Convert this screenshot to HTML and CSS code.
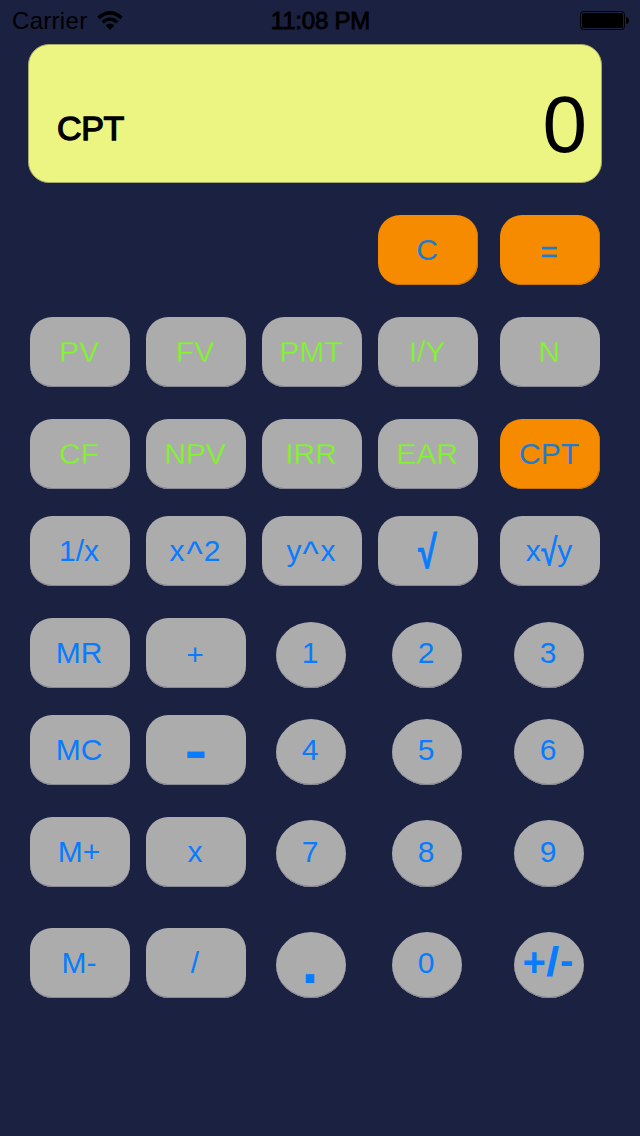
FILE: index.html
```html
<!DOCTYPE html>
<html lang="en">
<head>
<meta charset="utf-8">
<title>Financial Calculator</title>
<link rel="stylesheet" href="styles.css">
</head>
<body>
<header class="status">
  <div class="carrier"><span>Carrier</span>
    <svg class="wifi" width="26" height="20" viewBox="0 0 26 20"><path d="M1.500 6.800Q13-3.200 24.500 6.800" fill="none" stroke="#000" stroke-width="3.600"/><path d="M5.600 11.200Q13 4.800 20.400 11.200" fill="none" stroke="#000" stroke-width="3.300"/><path d="M8.600 14.400Q13 10.400 17.400 14.400L13 19Z"/></svg>
  </div>
  <div class="clock">11:08 PM</div>
  <svg class="battery" width="49" height="20" viewBox="0 0 49 20"><rect x=".5" y=".5" width="44" height="18" rx="3" fill="none" stroke="#000"/><rect x="2" y="2" width="41" height="15" rx="1.500"/><path d="M46 6Q49 6.500 49 9.500Q49 12.500 46 13Z"/></svg>
</header>
<main>
  <section class="display"><span class="mode">CPT</span><span class="value">0</span></section>
  <section class="keys">
    <div class="row end"><button class="key orange">C</button><button class="key orange low">=</button></div>
    <div class="row"><button class="key green">PV</button><button class="key green">FV</button><button class="key green">PMT</button><button class="key green">I/Y</button><button class="key green">N</button></div>
    <div class="row tight"><button class="key green">CF</button><button class="key green">NPV</button><button class="key green">IRR</button><button class="key green">EAR</button><button class="key orange">CPT</button></div>
    <div class="row"><button class="key">1/x</button><button class="key">x<span class="caret">^</span>2</button><button class="key">y<span class="caret">^</span>x</button><button class="key root"><span>√</span></button><button class="key">x<span class="radical">√</span>y</button></div>
    <div class="row tight"><button class="key">MR</button><button class="key low">+</button><button class="key digit">1</button><button class="key digit">2</button><button class="key digit">3</button></div>
    <div class="row"><button class="key">MC</button><button class="key minus"><span>-</span></button><button class="key digit">4</button><button class="key digit">5</button><button class="key digit">6</button></div>
    <div class="row wide"><button class="key">M+</button><button class="key">x</button><button class="key digit tall">7</button><button class="key digit tall">8</button><button class="key digit tall">9</button></div>
    <div class="row"><button class="key">M-</button><button class="key">/</button><button class="key digit point">.</button><button class="key digit">0</button><button class="key digit sign">+<span class="slash">/</span><span class="dash">-</span></button></div>
  </section>
</main>
</body>
</html>
```
FILE: styles.css
```css
* { box-sizing: border-box; }
body {
  margin: 0;
  width: 640px;
  height: 1136px;
  overflow: hidden;
  background: #1b2141;
  color: #000;
  font-family: "Liberation Sans", Arial, sans-serif;
}
.status {
  display: grid;
  grid-template-columns: 1fr auto 1fr;
  align-items: center;
  height: 44px;
  padding: 0 11px 3px 12px;
  font-size: 24px;
  line-height: 40px;
}
.carrier { display: flex; align-items: center; gap: 10px; letter-spacing: .3px; }
.clock { -webkit-text-stroke: .8px #000; letter-spacing: -.2px; }
.battery { justify-self: end; }
.display {
  display: flex;
  justify-content: space-between;
  width: 574px;
  height: 139px;
  margin-left: 28px;
  padding: 0 14px 0 28px;
  border: 1px solid #a5aa68;
  border-radius: 21px;
  background: #ecf582;
}
.mode { font-size: 34px; line-height: 166px; letter-spacing: -.4px; -webkit-text-stroke: 1.3px #000; }
.value { font-size: 80px; line-height: 159px; }
.keys { padding: 32px 40px 0 30px; }
.row { display: flex; align-items: flex-end; gap: 16px; height: 70px; margin-bottom: 32px; }
.tight { margin-bottom: 27px; }
.wide { margin-bottom: 41px; }
.end { justify-content: flex-end; }
.key {
  flex: none;
  width: 100px;
  height: 70px;
  padding: 0 2px 0 0;
  border: 0;
  border-radius: 22px;
  background: #acacac;
  box-shadow: inset 0 -2px 0 -1px #878995, inset 0 -1px 0 #878995;
  color: #087bff;
  font: 30px/70px "Liberation Sans", Arial, sans-serif;
  text-align: center;
  white-space: nowrap;
}
.key:last-child { margin-left: 6px; }
.green { color: #82f52c; -webkit-text-stroke: .3px #acacac; }
.orange { background: #f78b00; box-shadow: inset -1px -1px 0 #c87514; color: #207bcf; }
.low { padding-top: 3px; line-height: 67px; }
.orange.low { -webkit-text-stroke: .4px #207bcf; }
.digit {
  width: 70px;
  height: 66px;
  margin: 0 16px 0 14px;
  padding-bottom: 5px;
  border-radius: 50%;
  line-height: 61px;
}
.digit:last-child { margin: 0 16px 0 20px; }
.tall { height: 67px; padding-bottom: 4px; line-height: 63px; }
.caret { display: inline-block; padding: 0 2.5px; transform: translateY(3px) scale(1.15); }
.radical { display: inline-block; transform: translateY(1px) scaleY(1.25); -webkit-text-stroke: .7px #087bff; }
.root { font-size: 38px; font-weight: bold; }
.root span { display: inline-block; transform: translateY(1px) scale(.9, 1.2); -webkit-text-stroke: .6px #087bff; }
.minus { font-size: 54px; font-weight: bold; }
.minus span { display: inline-block; transform: translate(1px, 0) scale(1.25, 1); }
.point { font-size: 60px; font-weight: bold; }
.sign { padding-right: 2px; font-size: 40px; font-weight: bold; }
.slash { display: inline-block; margin: 0 2px 0 1px; transform: scaleX(1.2); }
.dash { display: inline-block; transform: translateY(-2px); }
```
